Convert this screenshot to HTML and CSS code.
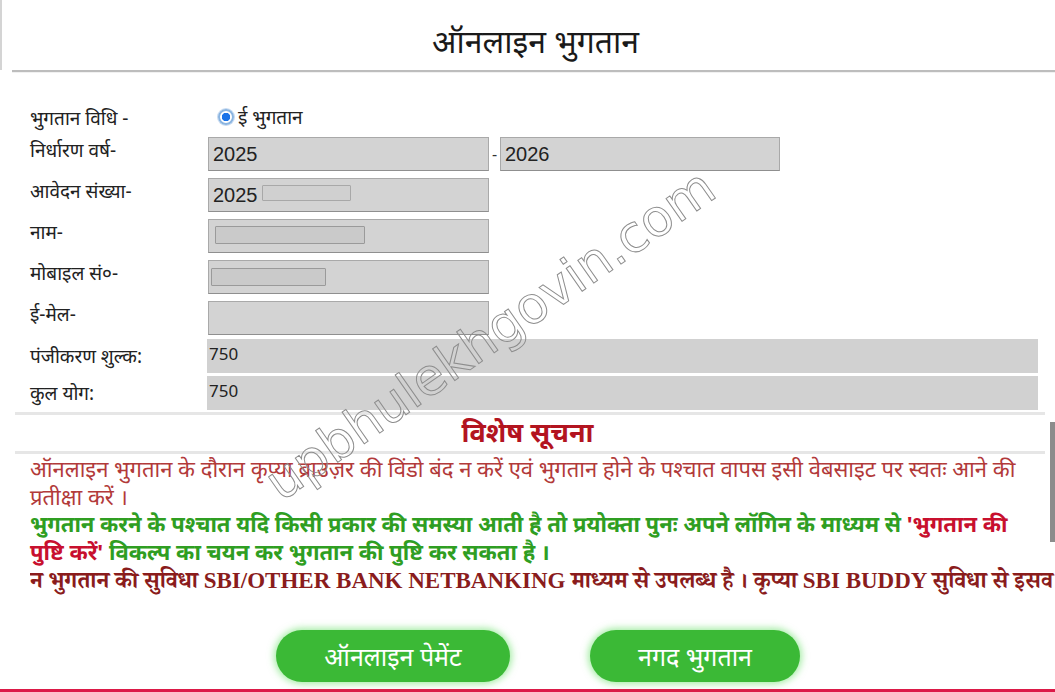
FILE: index.html
```html
<!DOCTYPE html>
<html lang="hi">
<head>
<meta charset="utf-8">
<title>ऑनलाइन भुगतान</title>
<link rel="stylesheet" href="styles.css">
</head>
<body>
<div class="page">
  <header class="head">
    <h1 class="title">ऑनलाइन भुगतान</h1>
  </header>
  <div class="title-rule"></div>

  <div class="form">
    <div class="label">भुगतान विधि -</div>
    <div class="field radio-field"><span class="radio"></span><span>ई भुगतान</span></div>

    <div class="label">निर्धारण वर्ष-</div>
    <div class="field pair">
      <div class="input">2025</div><span class="dash">-</span><div class="input">2026</div>
    </div>

    <div class="label">आवेदन संख्या-</div>
    <div class="field"><div class="input">2025<span class="redact r1"></span></div></div>

    <div class="label">नाम-</div>
    <div class="field"><div class="input"><span class="redact r2"></span></div></div>

    <div class="label">मोबाइल सं०-</div>
    <div class="field"><div class="input"><span class="redact r3"></span></div></div>

    <div class="label">ई-मेल-</div>
    <div class="field"><div class="input"></div></div>
  </div>

  <div class="fees">
    <div class="label">पंजीकरण शुल्क:</div>
    <div class="fee-bar">750</div>
    <div class="label">कुल योग:</div>
    <div class="fee-bar">750</div>
  </div>

  <div class="rule"></div>
  <h2 class="notice-title">विशेष सूचना</h2>
  <div class="rule"></div>

  <div class="notice">
    <p class="n1">ऑनलाइन भुगतान के दौरान कृप्या ब्राउज़र की विंडो बंद न करें एवं भुगतान होने के पश्चात वापस इसी वेबसाइट पर स्वतः आने की प्रतीक्षा करें ।</p>
    <p class="n2">भुगतान करने के पश्चात यदि किसी प्रकार की समस्या आती है तो प्रयोक्ता पुनः अपने लॉगिन के माध्यम से <span class="hl">'भुगतान की पुष्टि करें'</span> विकल्प का चयन कर भुगतान की पुष्टि कर सकता है ।</p>
    <div class="marquee"><span>न भुगतान की सुविधा SBI/OTHER BANK NETBANKING माध्यम से उपलब्ध है । कृप्या SBI BUDDY सुविधा से इसव</span></div>
  </div>

  <div class="buttons">
    <button class="btn btn-online">ऑनलाइन पेमेंट</button>
    <button class="btn btn-cash">नगद भुगतान</button>
  </div>

  <div class="watermark">upbhulekhgovin.com</div>
  <div class="scroll-thumb"></div>
</div>
<div class="bottom-bar"></div>
</body>
</html>
```

FILE: styles.css
```css
* { box-sizing: border-box; }
html, body { margin: 0; padding: 0; background: #fff; }
body {
  font-family: "Noto Sans", "Noto Sans Devanagari", "Lohit Devanagari", sans-serif;
  color: #222;
  width: 1055px;
  height: 692px;
  overflow: hidden;
}
.page { position: relative; height: 689px; }

.head {
  height: 70px;
  border-left: 2px solid #d4d4d4;
  display: flex;
  justify-content: center;
  align-items: center;
}
.title {
  margin: 0;
  font-size: 32px;
  font-weight: 400;
  color: #1a1a1a;
  padding-top: 10px;
  padding-left: 14px;
}
.title-rule {
  margin-left: 12px;
  height: 3px;
  border-top: 2px solid #bdbdbd;
  background: #f1f1f1;
}

.form {
  display: grid;
  grid-template-columns: 178px 583px;
  row-gap: 7px;
  margin: 32px 0 0 30px;
}
.label {
  font-size: 19px;
  color: #222;
  line-height: 24px;
}
.form .label { padding-top: 1px; }
.radio-field {
  display: flex;
  align-items: center;
  gap: 4px;
  font-size: 19px;
  margin-left: 10px;
  height: 24px;
}
.radio {
  width: 16px;
  height: 16px;
  border-radius: 50%;
  border: 2px solid #8ab4e0;
  background: radial-gradient(circle, #1a73e8 0 4px, #fff 4.5px);
  box-shadow: 0 0 0 1px #c9dcf2;
}
.field { display: flex; align-items: center; }
.pair { gap: 0; }
.dash { width: 11px; text-align: center; font-size: 16px; color: #333; }
.input {
  position: relative;
  width: 281px;
  height: 34px;
  background: #d3d3d3;
  border: 1px solid #a9a9a9;
  border-bottom-color: #8f8f8f;
  font-family: "Liberation Sans", Arial, sans-serif;
  font-size: 20px;
  color: #222;
  line-height: 32px;
  padding-left: 4px;
}
.pair .input:last-child { width: 280px; }
.redact {
  position: absolute;
  background: #cacaca;
  border: 1px solid #9a9a9a;
  border-radius: 1px;
}
.r1 { left: 53px; top: 6px; width: 89px; height: 16px; border-color: #a8a8a8; background: #d0d0d0; }
.r2 { left: 6px; top: 6px; width: 150px; height: 18px; }
.r3 { left: 2px; top: 7px; width: 115px; height: 18px; }

.fees {
  display: grid;
  grid-template-columns: 177px 831px;
  row-gap: 3px;
  margin: 4px 0 0 30px;
}
.fees .label { line-height: 34px; }
.fee-bar {
  height: 34px;
  background: #d1d1d1;
  font-size: 17px;
  line-height: 30px;
  padding-left: 2px;
  color: #222;
}

.rule {
  margin: 2px 10px 0 15px;
  height: 3px;
  background: #e6e6e6;
}
.notice-title {
  margin: 0;
  text-align: center;
  font-size: 27px;
  font-weight: 700;
  color: #b3141f;
  line-height: 34px;
}

.notice { padding: 0 15px 0 30px; }
.notice p { margin: 0; font-size: 22px; line-height: 27.5px; }
.n1 { color: #b23a3a; margin-top: 1px !important; }
.n2 { color: #2f9e22; font-weight: 700; }
.hl { color: #c8102e; }
.marquee {
  white-space: nowrap;
  overflow: hidden;
  margin-right: -15px;
  font-family: "Liberation Serif", "Noto Serif Devanagari", serif;
  font-weight: 700;
  font-size: 23px;
  line-height: 32px;
  color: #8a1c1c;
}

.buttons {
  display: flex;
  justify-content: center;
  gap: 80px;
  margin-top: 33px;
  padding-left: 21px;
}
.btn {
  height: 52px;
  border: none;
  border-radius: 26px;
  background: #3bb936;
  color: #fff;
  font-family: inherit;
  font-size: 25px;
  box-shadow: 0 0 7px 2px rgba(90, 220, 90, 0.55);
}
.btn-online { width: 234px; }
.btn-cash { width: 210px; }

.watermark {
  position: absolute;
  left: 205px;
  top: 305px;
  width: 570px;
  text-align: center;
  transform: rotate(-35deg);
  font-family: "DejaVu Sans", sans-serif;
  font-size: 51px;
  color: transparent;
  -webkit-text-stroke: 1px #8d8d8d;
  pointer-events: none;
}
.scroll-thumb {
  position: absolute;
  right: 0;
  top: 422px;
  width: 5px;
  height: 120px;
  background: #8c8c8c;
}
.bottom-bar { height: 3px; background: #dc1a48; }
```
